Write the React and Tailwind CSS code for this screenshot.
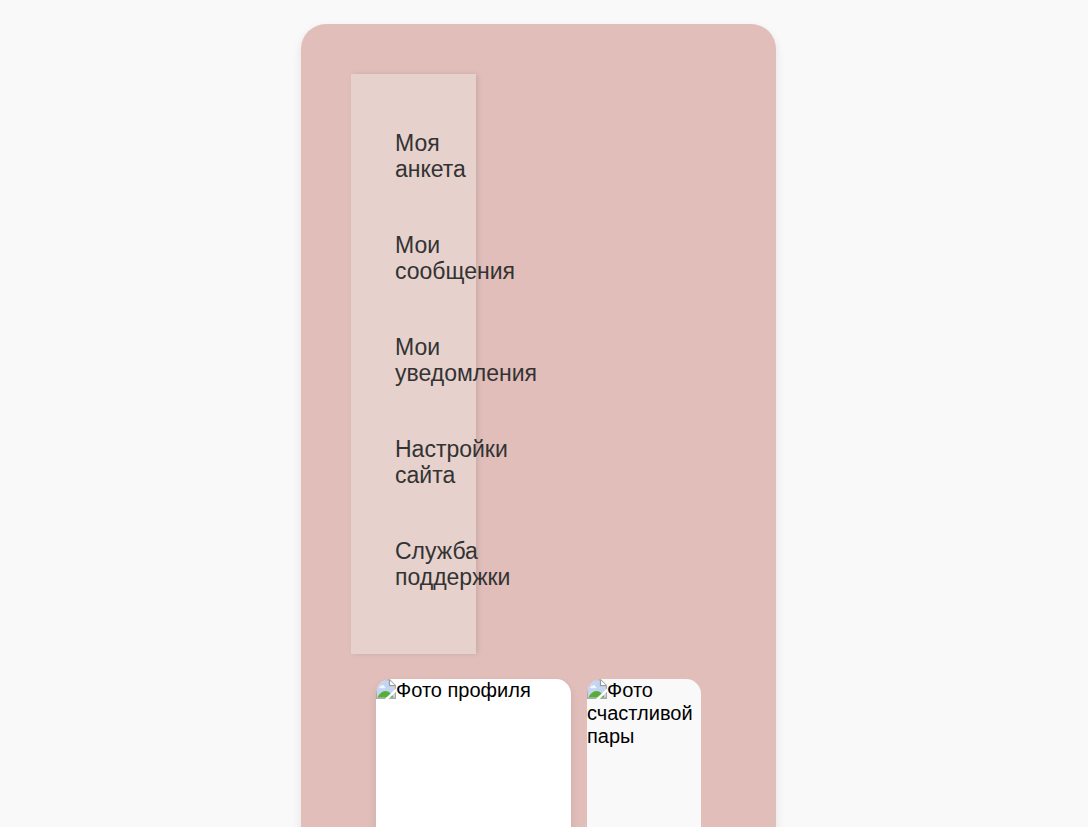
const menuItems = [
  ['Моя', 'анкета'],
  ['Мои', 'сообщения'],
  ['Мои', 'уведомления'],
  ['Настройки', 'сайта'],
  ['Служба', 'поддержки'],
];

function MissingImageIcon() {
  return (
    <svg className="inline-block size-5 align-top" viewBox="0 0 20 20" aria-hidden="true">
      <path d="M0.7 0.7H13.5L19.3 6.5V19.3H0.7Z" fill="#e6edfb" stroke="#aaaaaa" strokeWidth="1.4" />
      <path d="M2 2H12.5V7.5H18V18H2Z" fill="#c3d5f5" />
      <path d="M3.5 8.5C3.5 7.2 4.6 6.6 5.6 6.9C6.3 5.6 8.1 6 8.3 7.4C9.4 7.4 9.8 8.6 9 9.2H4.2C3.8 9.1 3.5 8.9 3.5 8.5Z" fill="#f3f7fe" />
      <path d="M1.5 18.6C3 15 6 12 9.5 12C13 12 16 15 17.5 18.6Z" fill="#57ad38" />
      <path d="M13.4 1V6.6H19" fill="#fff" stroke="#999999" strokeWidth="1.4" />
      <path d="M20 9.5V12.8L12.5 20H8.8Z" fill="#fff" />
    </svg>
  );
}

function Photo({ label, className }) {
  return (
    <figure className={`h-75 overflow-hidden rounded-[15px] text-xl leading-[23px] text-black ${className}`}>
      <MissingImageIcon />
      {label}
    </figure>
  );
}

export default function App() {
  return (
    <div className="h-screen overflow-y-auto bg-[#f9f9f9] py-6 pr-[11px] font-['Liberation_Sans',Arial,sans-serif] [scrollbar-width:none]">
      <main className="mx-auto max-w-[475px] rounded-[25px] bg-[#e1beba] p-[50px] shadow-[0_4px_10px_rgba(0,0,0,0.1)]">
        <nav className="w-1/3 bg-[#e6d1cc] px-11 pt-14 pb-16 shadow-[2px_0_5px_rgba(0,0,0,0.1)]">
          <ul className="flex flex-col gap-[50px] text-[23px] leading-[26px] text-[#333]">
            {menuItems.map(([first, second]) => (
              <li key={second}>
                <a href="#" className="block">
                  {first}
                  <br />
                  {second}
                </a>
              </li>
            ))}
          </ul>
        </nav>
        <section className="flex gap-4 p-[25px]">
          <Photo label="Фото профиля" className="w-[195px] shrink-0 bg-white shadow-[0_4px_8px_rgba(0,0,0,0.1)]" />
          <Photo label="Фото счастливой пары" className="w-[114px] shrink-0 bg-[#f9f9f9]" />
        </section>
      </main>
    </div>
  );
}
